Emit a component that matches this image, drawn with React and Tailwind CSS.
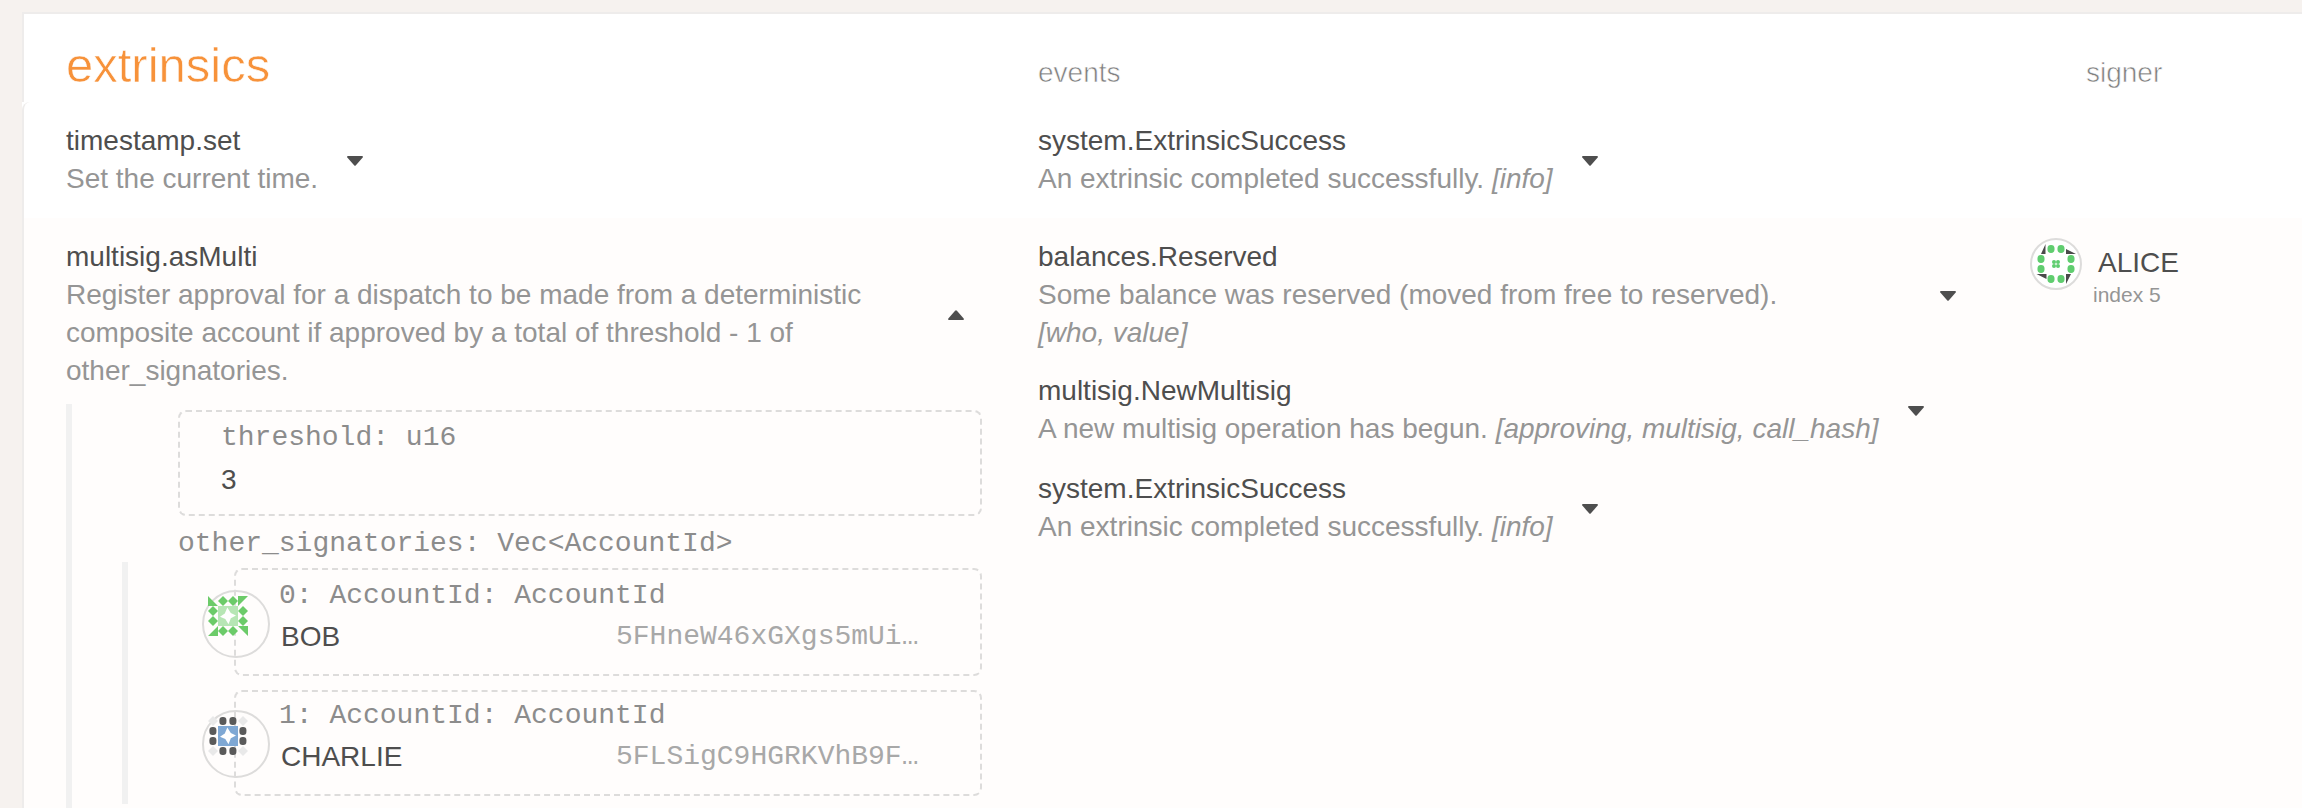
const THIN = "[-webkit-text-stroke:0.6px_white]";

function Caret({ up = false, className = "" }) {
  return (
    <svg viewBox="0 0 16 10" className={`h-[10px] w-4 shrink-0 fill-[#4e4e4e] ${className}`}>
      <path d={up ? "M7.1 .8Q8-.2 8.9.8L15.7 8.4Q16.4 10 15 10H1Q-.4 10 .3 8.4Z" : "M7.1 9.2Q8 10.2 8.9 9.2L15.7 1.6Q16.4 0 15 0H1Q-.4 0 .3 1.6Z"} />
    </svg>
  );
}

function Entry({ title, text, args, width = "", gap = "ml-[29px]", up, className = "" }) {
  return (
    <div className={`flex items-center ${className}`}>
      <div className={`${width} whitespace-pre`}>
        <div className="text-[#4e4e4e]">{title}</div>
        <div className="text-[#959595]">
          {text}
          {args && <em>{args}</em>}
        </div>
      </div>
      <Caret up={up} className={`mt-0.5 ${gap}`} />
    </div>
  );
}

const STAR = "M19.300 11.500L22.800 17L28 19.500L22.800 22.300L20.500 28.300L17.300 23L12 20.700L16.800 17.500Z";

function BobIcon() {
  return (
    <svg viewBox="0 0 40 40" className="h-10 w-10">
      <g fill="#6ccb69">
        <path d="M0 0V10H10ZM30 0H40L30 10ZM0 40H10V30ZM30 30H40V40Z" />
        {[[15, 5], [25, 5], [15, 35], [25, 35], [5, 15], [5, 25], [35, 15], [35, 25]].map(([x, y]) => (
          <path key={`${x}-${y}`} d={`M${x} ${y - 5}l5 5l-5 5l-5 -5z`} />
        ))}
      </g>
      <path d="M10 10H30V30H10Z" fill="#b7e6b5" />
      <path d={STAR} fill="#fff" />
    </svg>
  );
}

function CharlieIcon() {
  return (
    <svg viewBox="0 0 40 40" className="h-10 w-10">
      {[[5, 5], [35, 5], [5, 35], [35, 35]].map(([x, y]) => (
        <path key={`${x}-${y}`} d={`M${x} ${y - 5}l5 5l-5 5l-5 -5z`} fill="#e9e9e9" />
      ))}
      {[[15, 5], [25, 5], [15, 35], [25, 35], [5, 15], [5, 25], [35, 15], [35, 25]].map(([x, y]) => (
        <rect key={`${x}-${y}`} x={x - 3.6} y={y - 4} width="7" height="8" rx="3.2" fill="#5a5a5a" />
      ))}
      <path d="M10 10H30V30H10Z" fill="#7fa8d4" />
      <path d={STAR} fill="#fff" />
    </svg>
  );
}

function AliceIcon() {
  return (
    <svg viewBox="0 0 48 48" className="h-12 w-12">
      <path d="M13.500 4V14H9ZM34 9L44 14H34ZM14.500 34V39L4.500 34ZM34 34H39L34 44Z" fill="#4a4a4a" />
      {[[19, 9], [29, 9], [19, 39], [29, 39], [9, 19], [9, 29], [39, 19], [39, 29]].map(([x, y]) => (
        <rect key={`${x}-${y}`} x={x - 3.5} y={y - 4} width="7" height="8" rx="3.4" fill="#5fcd6f" />
      ))}
      {[[22, 22], [26, 22], [22, 26], [26, 26]].map(([x, y]) => (
        <circle key={`${x}-${y}`} cx={x} cy={y} r="2" fill="#5fcd6f" />
      ))}
    </svg>
  );
}

function Signatory({ label, name, address, icon, avatarTop = "top-5", className = "" }) {
  return (
    <div className={`relative ml-[106px] w-[748px] rounded-lg border-2 border-dashed border-[#dddcdb] pl-[42px] ${className}`}>
      <div className={`absolute -left-[34px] h-[68px] w-[68px] rounded-full border-2 border-[#dddcdb] pl-1 pt-1 ${avatarTop}`}>{icon}</div>
      <div className="pl-px font-['Liberation_Mono',monospace] text-[#8c8c8c]">{label}</div>
      <div className="mt-[3px] flex pl-[3px]">
        <div className="w-[335px] text-[#4e4e4e]">{name}</div>
        <div className="font-['Liberation_Mono',monospace] text-[#a8a8a8]">{address}</div>
      </div>
    </div>
  );
}

export default function App() {
  return (
    <div className="h-[808px] w-[2302px] overflow-hidden bg-[#f6f2ef] pl-[22px] pt-3 font-['Liberation_Sans',sans-serif] text-[28px] leading-[38px]">
      <div className="flex h-[90px] items-baseline border-l-2 border-t-2 border-[#eeeceb] bg-white pl-[42px] pt-[19px]">
        <h1 className={`w-[972px] text-[49px] leading-[64px] text-[#f7923a] ${THIN}`}>extrinsics</h1>
        <div className={`w-[1048px] text-[#808080] ${THIN}`}>events</div>
        <div className={`text-[#808080] ${THIN}`}>signer</div>
      </div>
      <div className="bg-white">
        <div className="flex h-[706px] flex-col overflow-hidden rounded-tl-lg border-l-2 border-[#eeeceb] bg-white">
          <div className="flex h-[116px] shrink-0 items-start pl-[42px] pt-5">
            <Entry className="w-[972px]" title="timestamp.set" text="Set the current time." />
            <Entry title="system.ExtrinsicSuccess" text="An extrinsic completed successfully. " args="[info]" />
          </div>
          <div className="flex grow items-start bg-[#fffdfc] pl-[42px]">
            <div className="w-[972px] pt-5">
              <Entry
                up
                width="w-[852px]"
                gap="ml-[30px]"
                title="multisig.asMulti"
                text={"Register approval for a dispatch to be made from a deterministic\ncomposite account if approved by a total of threshold - 1 of\nother_signatories."}
              />
              <div className="mt-[14px] h-[404px] w-[917px] border-l-[6px] border-[#f1f1f1] pl-[50px] pt-[6px]">
                <div className="ml-[56px] h-[106px] w-[804px] rounded-lg border-2 border-dashed border-[#dddcdb] pl-[41px] pt-[7px]">
                  <div className="font-['Liberation_Mono',monospace] text-[#8c8c8c]">threshold: u16</div>
                  <div className="mt-1 text-[#4e4e4e]">3</div>
                </div>
                <div className="ml-[56px] mt-[9px] font-['Liberation_Mono',monospace] text-[#8c8c8c]">other_signatories: Vec&lt;AccountId&gt;</div>
                <div className="-mt-px h-[242px] border-l-[6px] border-[#f1f1f1] pt-[6px]">
                  <Signatory className="h-[108px] pt-[7px]" label="0: AccountId: AccountId" name="BOB" address="5FHneW46xGXgs5mUi…" icon={<BobIcon />} />
                  <Signatory className="mt-[14px] h-[106px] pt-[5px]" avatarTop="top-[18px]" label="1: AccountId: AccountId" name="CHARLIE" address="5FLSigC9HGRKVhB9F…" icon={<CharlieIcon />} />
                </div>
              </div>
            </div>
            <div className="w-[992px] pt-5">
              <Entry
                width="w-[874px]"
                gap="ml-7"
                title="balances.Reserved"
                text={"Some balance was reserved (moved from free to reserved).\n"}
                args="[who, value]"
              />
              <Entry className="mt-5" title="multisig.NewMultisig" text="A new multisig operation has begun. " args="[approving, multisig, call_hash]" />
              <Entry className="mt-[22px]" title="system.ExtrinsicSuccess" text="An extrinsic completed successfully. " args="[info]" />
            </div>
            <div className="flex items-start pt-5">
              <div className="h-[52px] w-[52px] rounded-full border-2 border-[#dddcdb] bg-white">
                <AliceIcon />
              </div>
              <div className="pl-[11px] pt-[6px]">
                <div className="pl-[5px] text-[#4e4e4e]">ALICE</div>
                <div className="-mt-px text-[21px] leading-7 text-[#959595]">index 5</div>
              </div>
            </div>
          </div>
        </div>
      </div>
    </div>
  );
}
